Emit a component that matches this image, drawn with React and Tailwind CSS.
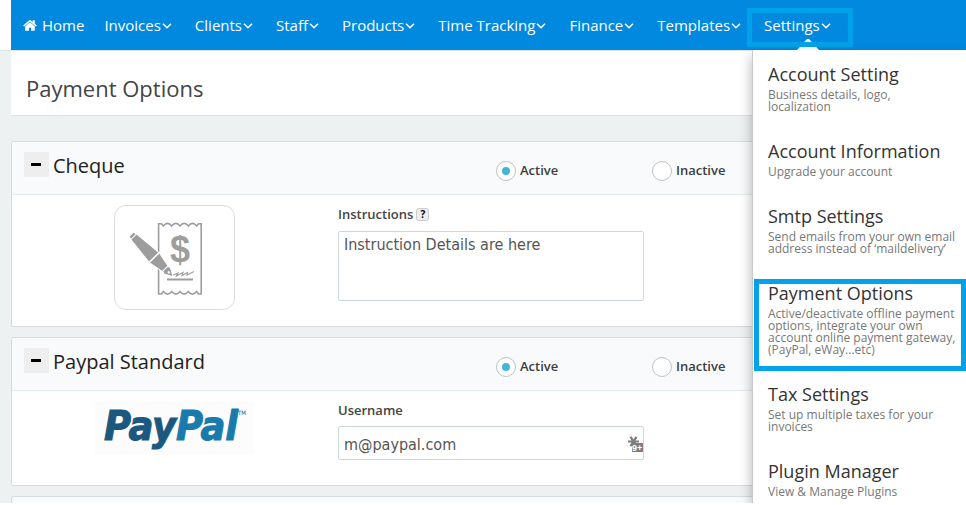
import { clsx } from 'clsx'

const navItems = ['Invoices', 'Clients', 'Staff', 'Products', 'Time Tracking', 'Finance', 'Templates']

const settingsMenu = [
  { title: 'Account Setting', text: 'Business details, logo,\nlocalization' },
  { title: 'Account Information', text: 'Upgrade your account' },
  { title: 'Smtp Settings', text: 'Send emails from your own email\naddress instead of ‘maildelivery’' },
  {
    title: 'Payment Options',
    text: 'Active/deactivate offline payment\noptions, integrate your own\naccount online payment gateway,\n(PayPal, eWay...etc)',
    active: true,
  },
  { title: 'Tax Settings', text: 'Set up multiple taxes for your\ninvoices' },
  { title: 'Plugin Manager', text: 'View & Manage Plugins' },
]

const HomeIcon = () => (
  <svg viewBox="0 0 1664 1792" className="h-[15px] w-[14px] fill-current" aria-hidden="true">
    <path d="M1408 992v480q0 26-19 45t-45 19H960v-384H704v384H320q-26 0-45-19t-19-45V992q0-1 .5-3t.5-3l575-474 575 474q1 2 1 6zm223-69l-62 74q-8 9-21 11h-3q-13 0-21-7L832 424l-692 577q-12 8-24 7-13-2-21-11l-62-74q-8-10-7-23.5T37 878L756 279q32-26 76-26t76 26l244 204V288q0-14 9-23t23-9h192q14 0 23 9t9 23v408l219 182q10 8 11 21.5t-7 23.5z" />
  </svg>
)

const Caret = () => (
  <svg viewBox="0 0 10 6" className="mt-[2px] h-[6px] w-[10px]" fill="none" stroke="currentColor" strokeWidth="1.5" aria-hidden="true">
    <path d="M1 .8 5 4.8 9 .8" />
  </svg>
)

const ChequeIcon = () => (
  <svg viewBox="0 0 121 105" className="h-[105px] w-[121px]" role="img" aria-label="Cheque">
    <path
      d="M44.600 18.800H47.500L49.300 21Q53.500 15.800 57.700 21Q61.900 15.800 66 21Q70.200 15.800 74.300 21Q78.500 15.800 82.700 21L84.500 18.800H87.200V89H84.500L82.700 86.500Q78.500 91.700 74.300 86.500Q70.200 91.700 66 86.500Q61.900 91.700 57.700 86.500Q53.500 91.700 49.300 86.500L47.500 89H44.600z"
      fill="none"
      stroke="#9d9d9d"
      strokeWidth="1.6"
    />
    <text x="66" y="57" textAnchor="middle" fontSize="36" fontWeight="700" fontFamily="Liberation Sans, sans-serif" fill="#9d9d9d">$</text>
    <path d="M53 74.500h26" stroke="#9d9d9d" strokeWidth="2" />
    <path d="M58 70.500l6-2.500-1.500 3 6.500-3.500-1 3 5.500-3-.5 2.500 7-3.500" fill="none" stroke="#9d9d9d" strokeWidth="1.100" />
    {/* pen */}
    <g transform="translate(19 31) rotate(45.500)" stroke="#fff" strokeWidth="1" fill="#9d9d9d">
      <path d="M-2.500-2Q-2.500-3.500-1-3.500H2v7H-1Q-2.500 3.500-2.500 2z" />
      <path d="M1-4 30-7v14L1 4z" />
      <path d="M30.500-7 46-4v8L30.500 7z" />
      <path d="M46-3.500 49-4.500 57 0l-8 4.500-3-1z" />
      <circle cx="51" cy="0" r="1.200" fill="#fff" stroke="none" />
    </g>
  </svg>
)

const PaypalLogo = () => (
  <svg viewBox="0 0 159 54" className="h-[54px] w-[159px] bg-[#fcfcfc]" role="img" aria-label="PayPal">
    <text x="9" y="39" fontSize="41" fontWeight="700" fontStyle="italic" fontFamily="DejaVu Sans Condensed, DejaVu Sans, sans-serif">
      <tspan fill="#1a587f" stroke="#1a587f" strokeWidth="1">Pay</tspan>
      <tspan fill="#187bac" stroke="#187bac" strokeWidth="1">Pal</tspan>
      <tspan fill="#1a587f" dy="-25" fontSize="6" fontWeight="400" fontStyle="normal">TM</tspan>
    </text>
  </svg>
)

const FillBadge = () => (
  <svg viewBox="0 0 16 17" className="h-[17px] w-[16px]" aria-hidden="true">
    <path d="M0 5.500h11M2.500.800 8.500 10.200M8.500.800 2.500 10.200" stroke="#7d7d7d" strokeWidth="2.200" />
    <path d="M4 7h11v9H4z" fill="#7d7d7d" />
    <text x="4" y="15" fontSize="9" fontWeight="700" fontFamily="Liberation Sans, sans-serif" fill="#fff">9+</text>
  </svg>
)

const StatusRadio = ({ name, label, ...rest }) => (
  <label className="flex w-[156px] items-center gap-1 text-[13px] leading-5 font-semibold text-[#3d3d3d]">
    <input
      type="radio"
      name={name}
      className="flex size-5 appearance-none items-center justify-center rounded-full border border-[#bfc1c4] bg-white before:size-2 before:rounded-full checked:before:bg-[#43b5d9]"
      {...rest}
    />
    <span className="pb-[2px]">{label}</span>
  </label>
)

const Panel = ({ id, title, children }) => (
  <section className="rounded-xs border border-[#d9dcde] bg-white">
    <header className="flex h-[53px] items-start border-b border-[#e2ebeb] bg-[#f9fafc] pt-[10px] pl-3">
      <div className="flex w-[472px] items-start gap-1">
        <button type="button" aria-label={`Collapse ${title}`} className="flex size-[25px] items-center justify-center bg-[#eeeeee] pr-[2px]">
          <span className="h-[3px] w-[10px] bg-black" />
        </button>
        <h2 className="text-[20px] leading-7 text-[#222]">{title}</h2>
      </div>
      <div className="flex pt-2">
        <StatusRadio name={id} label="Active" defaultChecked />
        <StatusRadio name={id} label="Inactive" />
      </div>
    </header>
    {children}
  </section>
)

const SettingsMenu = () => (
  <div className="absolute top-[50px] right-0 bottom-0 w-[214px] overflow-hidden border-l border-[#c9c9c9] bg-white shadow-[0_6px_12px_rgba(0,0,0,0.3)]">
    <ul>
      {settingsMenu.map(({ title, text, active }) => (
        <li key={title} className="relative">
          <a href="#" className="block pt-3 pb-[14px] pl-[15px]">
            <span className="block text-[18px] leading-6 text-[#333]">{title}</span>
            <span className="mt-[3px] block text-[12px] leading-3 whitespace-pre text-[#777]">{text}</span>
          </a>
          <span className={clsx('pointer-events-none absolute top-[10px] right-0 -bottom-px left-px border-[5px] border-[#00a2ea]', !active && 'hidden')} />
        </li>
      ))}
    </ul>
  </div>
)

function App() {
  const fieldClass = "block w-[306px] rounded-xs border border-[#cbd8da] bg-white px-[5px] font-['DejaVu_Sans_Condensed','DejaVu_Sans',sans-serif] text-[16px] text-[#555] outline-none"

  return (
    <div className="h-screen overflow-hidden bg-white pb-[2px] font-['Open_Sans',sans-serif]">
      <div className="relative h-full overflow-hidden bg-[#edf1f2]">
        <div className="bg-white pl-[11px]">
          <nav className="flex h-[50px] items-center bg-[#0089df] pl-3 text-[15px] leading-5 whitespace-nowrap text-white">
            <a href="#" className="mr-5 flex items-center gap-[5px]">
              <HomeIcon />
              Home
            </a>
            {navItems.map((item) => (
              <a key={item} href="#" className="mr-[23px] flex items-center gap-px">
                {item}
                <Caret />
              </a>
            ))}
            <a href="#" className="relative flex items-center gap-px">
              Settings
              <Caret />
              <svg viewBox="0 0 22 11" className="absolute top-[24px] left-[33px] h-[11px] w-[22px] fill-white" aria-hidden="true">
                <path d="M10 0h2L22 11H0z" />
              </svg>
              <span className="absolute -top-[7px] -right-[22px] -bottom-[12px] -left-[17px] border-[5px] border-[#00a2ea]" />
            </a>
          </nav>
        </div>

        <div className="border-t border-[#dfe6e7] pl-[11px]">
          <div className="border-b border-[#dde3e5] bg-white px-[15px] pt-[27px] pb-[17px]">
            <h1 className="text-[22px] leading-5 text-[#444]">Payment Options</h1>
          </div>

          <main className="flex flex-col gap-[10px] pt-[25px]">
            <Panel id="cheque" title="Cheque">
              <div className="flex pt-[10px] pb-4">
                <div className="flex w-[326px] shrink-0 justify-center pr-[2px]">
                  <div className="size-fit rounded-xl outline -outline-offset-1 outline-[#dcdcdc]">
                    <ChequeIcon />
                  </div>
                </div>
                <div>
                  <div className="mb-2 flex items-center gap-[3px] text-[13px] leading-[18px] font-semibold text-[#444]">
                    <label htmlFor="instructions">Instructions</label>
                    <button type="button" aria-label="Help" className="flex size-[13px] items-center justify-center rounded-[3px] border border-[#ccc] bg-[#eee] text-[10px] leading-3 font-bold text-black">
                      ?
                    </button>
                  </div>
                  <textarea id="instructions" defaultValue="Instruction Details are here" className={clsx(fieldClass, 'h-[70px] resize-none py-[3px] leading-5')} />
                </div>
              </div>
            </Panel>

            <Panel id="paypal" title="Paypal Standard">
              <div className="flex pt-[10px] pb-[25px]">
                <div className="flex w-[326px] shrink-0 justify-center pr-[2px]">
                  <PaypalLogo />
                </div>
                <div>
                  <label htmlFor="username" className="mb-[7px] block text-[13px] leading-[18px] font-semibold text-[#444]">
                    Username
                  </label>
                  <div className="relative">
                    <input id="username" type="text" defaultValue="m@paypal.com" className={clsx(fieldClass, 'h-[34px] pt-[2px]')} />
                    <span className="absolute top-[10px] right-0">
                      <FillBadge />
                    </span>
                  </div>
                </div>
              </div>
            </Panel>

            <section className="h-[60px] rounded-xs border border-[#d9dcde] bg-[#f9fafc]" />
          </main>
        </div>

        <SettingsMenu />
      </div>
    </div>
  )
}

export default App
